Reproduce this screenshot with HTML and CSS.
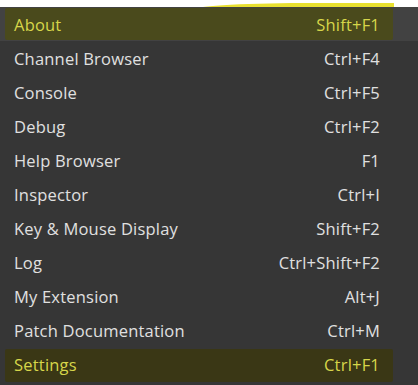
FILE: index.html
```html
<!DOCTYPE html>
<html>
<head>
<meta charset="utf-8">
<link rel="stylesheet" href="styles.css">
</head>
<body>
<div class="top"><span class="smear"></span></div>
<ul class="menu">
  <li class="item first marked"><span class="label">About</span><span class="key">Shift+F1</span></li>
  <li class="item"><span class="label">Channel Browser</span><span class="key">Ctrl+F4</span></li>
  <li class="item"><span class="label">Console</span><span class="key">Ctrl+F5</span></li>
  <li class="item"><span class="label">Debug</span><span class="key">Ctrl+F2</span></li>
  <li class="item"><span class="label">Help Browser</span><span class="key">F1</span></li>
  <li class="item"><span class="label">Inspector</span><span class="key">Ctrl+I</span></li>
  <li class="item"><span class="label">Key &amp; Mouse Display</span><span class="key">Shift+F2</span></li>
  <li class="item"><span class="label">Log</span><span class="key">Ctrl+Shift+F2</span></li>
  <li class="item"><span class="label">My Extension</span><span class="key">Alt+J</span></li>
  <li class="item"><span class="label">Patch Documentation</span><span class="key">Ctrl+M</span></li>
  <li class="item marked last"><span class="label">Settings</span><span class="key">Ctrl+F1</span></li>
</ul>
</body>
</html>
```
FILE: styles.css
```css
html, body {
  margin: 0;
  padding: 0;
  background: #363636;
  width: 418px;
  height: 385px;
  overflow: hidden;
}
body {
  font-family: "Open Sans", "Noto Sans", sans-serif;
  font-size: 16.5px;
  letter-spacing: 0.2px;
  color: #e0e0e0;
}
.top {
  height: 7px;
  background: #ffffff;
  position: relative;
}
.smear {
  position: absolute;
  left: 196px;
  top: 3px;
  width: 198px;
  height: 6px;
  background: #e8e030;
  border-radius: 60% 0 0 0 / 100% 0 0 0;
}
.menu {
  list-style: none;
  margin: 0;
  padding: 0;
}
.item {
  height: 34px;
  display: flex;
  align-items: center;
  justify-content: space-between;
  padding: 0 38px 0 14px;
  position: relative;
}
.item.first {
  background: #424242;
}
.item .label, .item .key {
  position: relative;
  z-index: 1;
}
.item.marked {
  color: #d6d64a;
}
.item.marked::before {
  content: "";
  position: absolute;
  left: 5px;
  right: 25px;
  top: 1px;
  bottom: 1px;
  background: #4a4a1c;
  border-radius: 2px;
}
.item.last::before {
  background: #3a3715;
  top: 2px;
  bottom: -1px;
}
```
